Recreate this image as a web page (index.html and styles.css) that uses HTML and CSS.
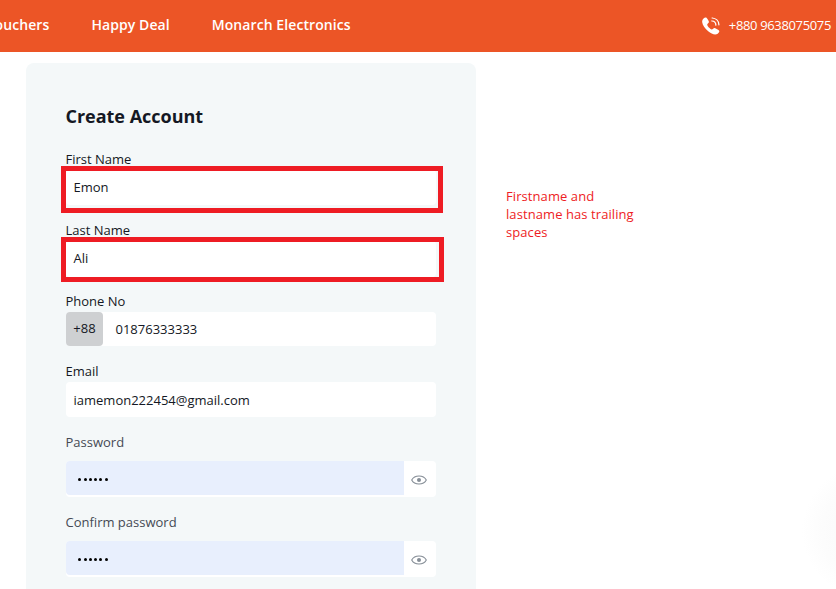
FILE: index.html
```html
<!DOCTYPE html>
<html lang="en">
<head>
<meta charset="utf-8">
<title>Create Account</title>
<link rel="stylesheet" href="styles.css">
</head>
<body>
<header class="topbar">
  <nav class="nav">
    <a class="nav-link">Vouchers</a>
    <a class="nav-link">Happy Deal</a>
    <a class="nav-link">Monarch Electronics</a>
  </nav>
  <div class="hotline">
    <svg class="phone-icon" viewBox="0 0 18 18" width="18" height="18">
      <path fill="#fff" d="M1.3 1.8C2.6.5 3.7.1 4.5.8C5.6 1.9 6.6 3.6 6.9 4.8C7.1 5.8 5.3 6.5 5.2 7.5C5.3 9.2 8 12 9.7 12.4C10.7 12.6 11.5 10.8 12.6 11C14.2 11.6 16 12.6 17 13.5C17.8 14.4 17 15.6 15.7 16.7C13.5 18.4 9.5 17.2 6.2 14.3C2.7 11.2.6 8.1.2 5.3C0 3.8.4 2.8 1.3 1.8Z"/>
      <path fill="none" stroke="#fff" stroke-width="1.25" stroke-linecap="round" d="M10.2 1C13.9 1.2 16.7 4 16.9 7.8M9.9 4C12.2 4.1 13.8 5.8 13.9 8.1"/>
    </svg>
    <span class="hotline-number">+880 9638075075</span>
  </div>
</header>
<main class="page">
  <form class="card">
    <h1 class="title">Create Account</h1>
    <div class="field">
      <label class="label">First Name</label>
      <div class="control">Emon<span class="mark mark-first"></span></div>
    </div>
    <div class="field">
      <label class="label">Last Name</label>
      <div class="control control-tall">Ali<span class="mark mark-last"></span></div>
    </div>
    <div class="field field-phone">
      <label class="label">Phone No</label>
      <div class="control control-phone"><span class="prefix">+88</span><span class="phone">01876333333</span></div>
    </div>
    <div class="field">
      <label class="label">Email</label>
      <div class="control control-email">iamemon222454@gmail.com</div>
    </div>
    <div class="field field-secret">
      <label class="label label-soft">Password</label>
      <div class="secret">
        <div class="dots"><i></i><i></i><i></i><i></i><i></i><i></i></div>
        <svg class="eye" viewBox="0 0 16 10" width="16" height="10"><path d="M.7 5C3.6-.4 12.4-.4 15.3 5C12.4 10.4 3.6 10.4.7 5Z"/><circle cx="8" cy="5" r="2"/></svg>
      </div>
    </div>
    <div class="field field-secret">
      <label class="label label-soft">Confirm password</label>
      <div class="secret">
        <div class="dots"><i></i><i></i><i></i><i></i><i></i><i></i></div>
        <svg class="eye" viewBox="0 0 16 10" width="16" height="10"><path d="M.7 5C3.6-.4 12.4-.4 15.3 5C12.4 10.4 3.6 10.4.7 5Z"/><circle cx="8" cy="5" r="2"/></svg>
      </div>
    </div>
  </form>
  <p class="note">Firstname and<br>lastname has trailing<br>spaces</p>
</main>
<div class="glow"></div>
</body>
</html>
```
FILE: styles.css
```css
* { box-sizing: border-box; }
html { overflow: hidden; }
body {
  margin: 0;
  height: 589px;
  overflow: hidden;
  position: relative;
  background: #fff;
  color: #141824;
  font: 13px/18px "Open Sans", "Noto Sans", sans-serif;
}
.topbar {
  height: 52px;
  padding-right: 5px;
  background: #ec5526;
  color: #fff;
  display: flex;
  justify-content: space-between;
  align-items: flex-start;
}
.nav {
  display: flex;
  gap: 42px;
  margin-left: -14.2px;
  padding-top: 15px;
}
.nav-link {
  font-size: 14px;
  line-height: 20px;
  font-weight: 600;
  letter-spacing: .08px;
  white-space: nowrap;
}
.hotline {
  display: flex;
  gap: 9px;
  padding-top: 17px;
}
.hotline-number {
  font-weight: 500;
  line-height: 17px;
  letter-spacing: -.35px;
  white-space: nowrap;
}
.page {
  display: flex;
  align-items: flex-start;
  gap: 30px;
  padding: 11px 0 0 26px;
}
.card {
  width: 450px;
  height: 526px;
  flex: none;
  padding: 41px 40px 0;
  border-radius: 8px 8px 0 0;
  background: #f4f8f9;
}
.title {
  margin: 0 0 21px -.5px;
  font-size: 18px;
  line-height: 25px;
  font-weight: 700;
  letter-spacing: -.02px;
}
.field { height: 71px; }
.field-phone { height: 70px; }
.field-secret { height: 80px; }
.label {
  display: block;
  height: 20px;
  line-height: 19px;
  margin-left: -.5px;
}
.label-soft { color: #454a54; }
.control {
  position: relative;
  height: 35px;
  padding: 0 7.5px;
  line-height: 35px;
  border-radius: 4px;
  background: #fff;
}
.control-tall { height: 36px; }
.control-email { line-height: 37px; }
.control-phone {
  display: flex;
  height: 34px;
  padding: 0;
}
.prefix {
  width: 37px;
  line-height: 33px;
  text-align: center;
  background: #ced0d2;
  border-radius: 4px;
}
.phone { margin-left: 12.5px; }
.mark {
  position: absolute;
  left: -5px;
  top: -4px;
  width: 382px;
  height: 47px;
  border: 5px solid #ee1c24;
}
.mark-last {
  width: 383px;
  height: 45px;
}
.secret {
  display: flex;
  align-items: center;
  justify-content: space-between;
  height: 36px;
  margin-top: 8px;
  padding: 0 9px 0 0;
  background: #fff;
  border-radius: 4px;
}
.dots {
  align-self: flex-start;
  display: flex;
  align-items: center;
  gap: 2.3px;
  width: 338px;
  height: 34px;
  padding: 3px 0 0 12.3px;
  border-radius: 4px 0 0 4px;
  background: #e8effd;
}
.dots i {
  width: 3px;
  height: 3px;
  border-radius: 50%;
  background: #000;
}
.eye {
  margin-top: 1px;
  fill: none;
  stroke: #858d96;
  stroke-width: 1.1;
}
.eye circle { fill: #858d96; stroke: none; }
.note {
  margin: 124px 0 0;
  color: #ee1c24;
  font-size: 13px;
  line-height: 18px;
  letter-spacing: .08px;
}
.glow {
  position: absolute;
  left: 800px;
  top: 455px;
  width: 36px;
  height: 134px;
  background: radial-gradient(circle at 70px 76px, #f8f8f8 0, #fcfcfc 48px, #fff 68px);
}
```
